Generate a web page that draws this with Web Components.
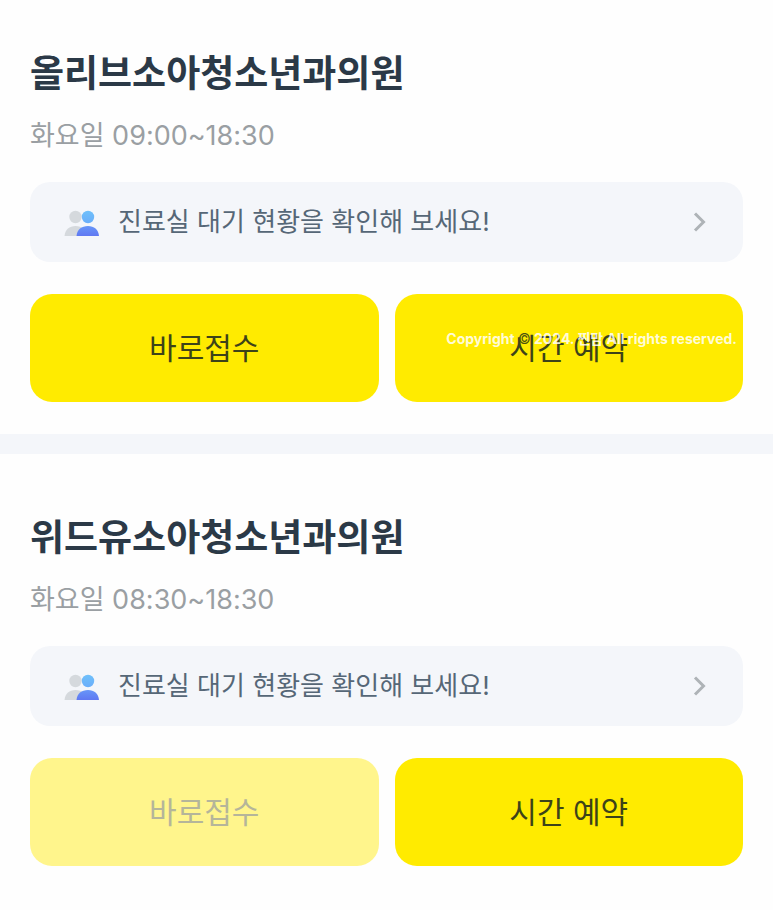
<!DOCTYPE html>
<html lang="ko">
<head>
<meta charset="utf-8">
<meta name="viewport" content="width=device-width, initial-scale=1">
<title>병원 접수</title>
<style>
    body {
        margin: 0;
        background: #fefefe;
        font-family: Inter, "Noto Sans CJK KR", sans-serif;
    }
    .mark {
        color: #4d5210;
        font-weight: 400;
    }
</style>
</head>
<body>
<clinic-list>
    <clinic-card>
        <span slot="name">올리브소아청소년과의원</span>
        <span slot="hours">화요일 09:00~18:30</span>
        <waiting-link slot="status">진료실 대기 현황을 확인해 보세요!</waiting-link>
        <action-button slot="actions">바로접수</action-button>
        <action-button slot="actions">시간 예약<span slot="note">Copyright <span class="mark">©</span> 2024. 찐맘 All rights reserved.</span></action-button>
    </clinic-card>
    <clinic-card>
        <span slot="name">위드유소아청소년과의원</span>
        <span slot="hours">화요일 08:30~18:30</span>
        <waiting-link slot="status">진료실 대기 현황을 확인해 보세요!</waiting-link>
        <action-button slot="actions" disabled>바로접수</action-button>
        <action-button slot="actions">시간 예약</action-button>
    </clinic-card>
</clinic-list>

<script>
class ClinicList extends HTMLElement {
    constructor() {
        super();
        this.attachShadow({ mode: 'open' });
    }

    connectedCallback() {
        this.shadowRoot.innerHTML = `
            <style>
                :host {
                    display: block;
                }
                main {
                    display: flex;
                    flex-direction: column;
                    gap: 20px;
                    background: #f4f6fa;
                }
                ::slotted(clinic-card:not(:first-child)) {
                    padding-top: 10px;
                }
            </style>
            <main><slot></slot></main>
        `;
    }
}

class ClinicCard extends HTMLElement {
    constructor() {
        super();
        this.attachShadow({ mode: 'open' });
    }

    connectedCallback() {
        this.shadowRoot.innerHTML = `
            <style>
                :host {
                    display: block;
                    background: #fefefe;
                }
                section {
                    padding: 48px 30px 32px;
                }
                h2 {
                    margin: 0;
                    color: #2b3947;
                    font-size: 37px;
                    font-weight: 700;
                    line-height: 52px;
                }
                p {
                    margin: 18px 0 28px;
                    color: #9a9fa3;
                    font-size: 27px;
                    line-height: 36px;
                }
                .actions {
                    display: grid;
                    grid-template-columns: 1fr 1fr;
                    gap: 16px;
                    margin-top: 32px;
                }
            </style>
            <section>
                <h2><slot name="name"></slot></h2>
                <p><slot name="hours"></slot></p>
                <slot name="status"></slot>
                <div class="actions"><slot name="actions"></slot></div>
            </section>
        `;
    }
}

class WaitingLink extends HTMLElement {
    constructor() {
        super();
        this.attachShadow({ mode: 'open' });
    }

    connectedCallback() {
        this.shadowRoot.innerHTML = `
            <style>
                :host {
                    display: block;
                }
                a {
                    display: flex;
                    align-items: center;
                    gap: 18px;
                    height: 80px;
                    padding: 0 36px 0 34px;
                    box-sizing: border-box;
                    border-radius: 20px;
                    background: #f4f6fa;
                    color: #566777;
                    font-size: 26px;
                    line-height: 40px;
                    text-decoration: none;
                    white-space: nowrap;
                }
                .label {
                    flex: 1;
                }
                svg {
                    flex: none;
                }
            </style>
            <a href="#waiting">
                <svg width="36" height="28" viewBox="0 0 36 28" aria-hidden="true">
                    <defs>
                        <linearGradient id="head" x1="0" y1="0" x2="0" y2="1">
                            <stop offset="0" stop-color="#6fc0fa"/>
                            <stop offset="1" stop-color="#6aaefa"/>
                        </linearGradient>
                        <linearGradient id="body" x1="0" y1="0" x2="0" y2="1">
                            <stop offset="0" stop-color="#6796f8"/>
                            <stop offset="1" stop-color="#6078f2"/>
                        </linearGradient>
                    </defs>
                    <circle cx="11.5" cy="9" r="6.2" fill="#d5d9dd"/>
                    <path d="M.5 28C1 21.5 5.5 18 11.5 18C18 18 22 21.5 22.5 28Z" fill="#d5d9dd"/>
                    <circle cx="24" cy="9" r="6.2" fill="url(#head)"/>
                    <path d="M12.5 28C13 21.5 17.5 18 24 18C30 18 34.5 21.5 35 28Z" fill="url(#body)"/>
                </svg>
                <span class="label"><slot></slot></span>
                <svg width="14" height="20" viewBox="0 0 14 20" fill="none" stroke="#aeb3b7" stroke-width="3" aria-hidden="true">
                    <path d="M2 1.5L10.5 10L2 18.5"/>
                </svg>
            </a>
        `;
    }
}

class ActionButton extends HTMLElement {
    constructor() {
        super();
        this.attachShadow({ mode: 'open' });
    }

    connectedCallback() {
        this.shadowRoot.innerHTML = `
            <style>
                :host {
                    display: block;
                    position: relative;
                }
                button {
                    display: block;
                    width: 100%;
                    height: 108px;
                    padding: 0;
                    border: 0;
                    border-radius: 22px;
                    background: #ffeb00;
                    color: #3d4319;
                    font-family: inherit;
                    font-size: 30px;
                    line-height: 44px;
                    cursor: pointer;
                }
                button:disabled {
                    background: #fff58c;
                    color: #b5b59a;
                    cursor: default;
                }
                ::slotted([slot="note"]) {
                    position: absolute;
                    top: 36px;
                    right: 6px;
                    color: rgba(255, 255, 255, 0.85);
                    font-size: 14px;
                    font-weight: 700;
                    line-height: 18px;
                    white-space: nowrap;
                    pointer-events: none;
                }
            </style>
            <button type="button"><slot></slot></button>
            <slot name="note"></slot>
        `;
        this.shadowRoot.querySelector('button').disabled = this.hasAttribute('disabled');
    }
}

customElements.define('clinic-list', ClinicList);
customElements.define('clinic-card', ClinicCard);
customElements.define('waiting-link', WaitingLink);
customElements.define('action-button', ActionButton);
</script>
</body>
</html>
